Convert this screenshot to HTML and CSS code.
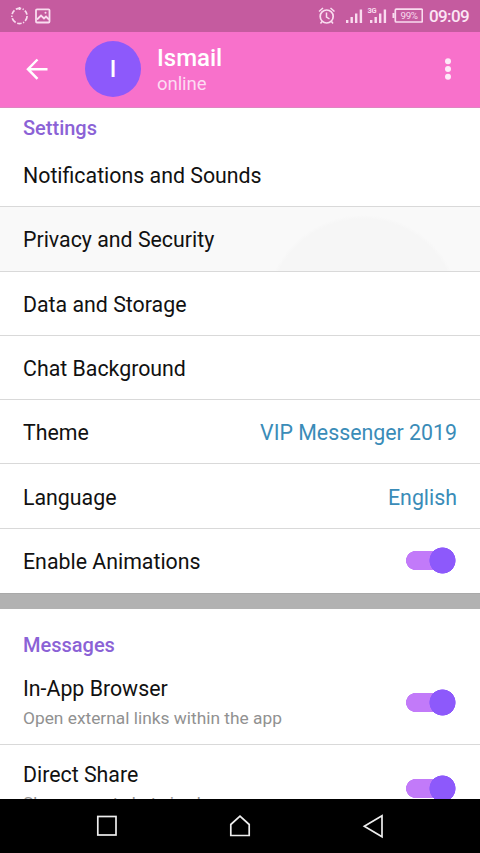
FILE: index.html
```html
<!DOCTYPE html>
<html lang="en">
<head>
<meta charset="utf-8">
<title>Settings</title>
<link rel="stylesheet" href="styles.css">
</head>
<body>
<div class="phone">
  <div class="status">
    <svg class="status-left" width="60" height="32" viewBox="0 0 60 32" fill="none" stroke="#f9dcef">
      <circle cx="19.500" cy="16" r="7.600" stroke-width="1.700" stroke-dasharray="5.500 1.500 1.200 1.500 4.500 1.700"/>
      <path d="M19.500 7v3" stroke-width="1.500"/>
      <rect x="36" y="9.300" width="13.500" height="13.200" rx="1" stroke-width="1.800"/>
      <path d="M37 19.500l4-4 3 3 2-2 3 3" stroke-width="1.800"/>
      <circle cx="45.500" cy="12.800" r="1" fill="#f9dcef" stroke="none"/>
    </svg>
    <div class="status-right">
      <svg width="108" height="32" viewBox="315 0 108 32" fill="none" stroke="#f9dcef">
        <circle cx="326.700" cy="16.500" r="6.500" stroke-width="1.700"/>
        <path d="M326.500 12.500v4.500l3 2M319 11.500l4-3.500M330.500 8l4 3.500M322 21.500l-1.500 2M331.500 21.500l1.500 2" stroke-width="1.500"/>
        <path d="M347.200 20v3M351.700 17v6M356.200 13.500v9.500M360.900 9.500v13.500M371.200 20v3M375.700 17v6M380.200 13.500v9.500M384.900 9.500v13.500" stroke-width="2.400"/>
        <rect x="395.300" y="9.200" width="27" height="12.800" rx="1" stroke-width="1.700"/>
        <path d="M393.500 13v5" stroke-width="2"/>
        <text x="367.500" y="12.500" class="net" textLength="9">3G</text>
        <text x="400.500" y="19.300" class="pct" textLength="17.500">99%</text>
      </svg>
      <span class="clock">09:09</span>
    </div>
  </div>
  <header class="bar">
    <svg class="back" width="24" height="24" viewBox="0 0 24 24" fill="none" stroke="#fff" stroke-width="2.500"><path d="M22.500 12.200H3M12.500 2.500L3 12.200l9.500 9.600"/></svg>
    <div class="avatar">I</div>
    <div class="who"><div class="name">Ismail</div><div class="state">online</div></div>
    <svg class="more" width="8" height="24" viewBox="0 0 8 24" fill="#fdeaf8"><circle cx="4" cy="4.200" r="3"/><circle cx="4" cy="12" r="3"/><circle cx="4" cy="19.800" r="3"/></svg>
  </header>
  <main class="list">
    <h2 class="head">Settings</h2>
    <div class="row">Notifications and Sounds</div>
    <div class="row pressed">Privacy and Security</div>
    <div class="row">Data and Storage</div>
    <div class="row">Chat Background</div>
    <div class="row">Theme<span class="value">VIP Messenger 2019</span></div>
    <div class="row">Language<span class="value">English</span></div>
    <div class="row last">Enable Animations<span class="switch"></span></div>
    <div class="gap"></div>
    <h2 class="head messages">Messages</h2>
    <div class="row double"><div>In-App Browser<div class="sub">Open external links within the app</div></div><span class="switch"></span></div>
    <div class="row double share"><div>Direct Share<div class="sub">Show recent chats in share menu</div></div><span class="switch"></span></div>
  </main>
  <nav class="nav">
    <svg width="24" height="26" viewBox="0 0 24 26"><rect x="2.800" y="3.500" width="18.200" height="18.500"/></svg>
    <svg width="24" height="26" viewBox="0 0 24 26"><path d="M2.800 22.500V11.500L12 3.200l9.200 8.300v11z"/></svg>
    <svg width="24" height="26" viewBox="0 0 24 26"><path d="M21 2.800v21L3.300 13.300z"/></svg>
  </nav>
</div>
</body>
</html>
```
FILE: styles.css
```css
body { margin: 0; font-family: Roboto, sans-serif; background: #fff; }
.phone { width: 480px; height: 853px; display: flex; flex-direction: column; overflow: hidden; }
.status { height: 32px; flex: none; background: #c55b9f; display: flex; justify-content: space-between; }
.status-right { display: flex; padding-right: 10px; }
.clock { width: 41px; margin-left: 6px; font-size: 17px; line-height: 33px; font-weight: 500; color: #fbe6f4; white-space: nowrap; letter-spacing: -.6px; }
.net { font-size: 7.500px; font-weight: 700; fill: #f9dcef; stroke: none; }
.pct { font-size: 9.800px; fill: #f9dcef; stroke: none; }
.bar { height: 76px; padding-bottom: 1px; flex: none; background: #f871cb; display: flex; align-items: center; border-bottom: 1px solid #df85c1; box-sizing: border-box; }
.back { margin-left: 25px; }
.avatar { width: 56px; height: 56px; margin-left: 36px; border-radius: 50%; background: #8d59fb; color: #fff; font-size: 23px; font-weight: 500; line-height: 58px; text-align: center; }
.who { margin-left: 16px; padding-top: 2px; color: #fff; flex: 1; }
.name { font-size: 24px; line-height: 28px; font-weight: 500; }
.state { font-size: 18.500px; line-height: 25px; color: #fcdcf2; letter-spacing: -.05px; }
.more { margin-right: 28px; }
.list { flex: 1; min-height: 0; overflow: hidden; background: #fff; }
.head { margin: 0; padding: 0 23px; height: 35px; line-height: 40px; font-size: 20px; font-weight: 500; color: #8b62d6; }
.row { box-sizing: border-box; height: 64.300px; padding: 2px 23px 0; border-bottom: 1px solid #d9d9d9; display: flex; align-items: center; justify-content: space-between; font-size: 21.330px; line-height: 25px; color: #111; }
.pressed { background: radial-gradient(circle at 363px 106px, #f6f6f6 0 94px, #f9f9f9 98px); }
.value { color: #3a8cb8; }
.last { border-bottom: 0; height: 64px; }
.gap { height: 16px; background: #b2b2b2; border-top: 1px solid #a9a9a9; box-sizing: border-box; }
.messages { height: 51px; line-height: 72px; }
.double { height: 85.500px; }
.share { padding-top: 1px; }
.share .sub { margin-top: 5px; }
.sub { margin-top: 6px; font-size: 17.330px; line-height: 23px; color: #919191; }
.switch { width: 50px; height: 27px; margin: -2px 1px 0 0; background: radial-gradient(circle at 36.500px 13.500px, #8d59fb 12.800px, transparent 13.400px), linear-gradient(#c27af9, #c27af9) 10px 4px / 27px 19px no-repeat, radial-gradient(circle at 9.500px 13.500px, #c27af9 9.200px, transparent 9.800px); }
.share .switch { margin-top: 0; }
.nav { height: 54px; flex: none; background: #000; display: flex; justify-content: space-between; align-items: center; padding: 0 95px; }
.nav svg { fill: none; stroke: #eee; stroke-width: 1.700; }
```
